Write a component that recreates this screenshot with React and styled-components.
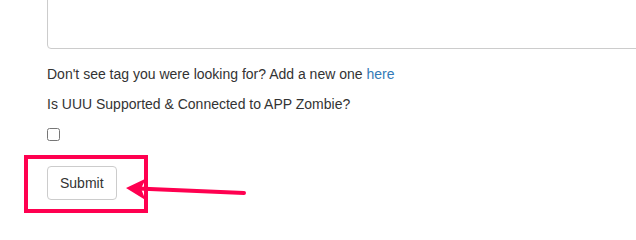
import React from "react";
import styled, { createGlobalStyle } from "styled-components";

const Global = createGlobalStyle`
  html, body { margin: 0; padding: 0; background: #fff; overflow: hidden; }
  body {
    font-family: "Liberation Sans", Arial, Helvetica, sans-serif;
    font-size: 14px;
    line-height: 20px;
    color: #333;
  }
  * { box-sizing: border-box; }
`;

const Page = styled.div`
  position: relative;
  width: 636px;
  height: 240px;
  overflow: hidden;
  padding-left: 47px;
`;

const FormGroup = styled.div`
  margin-bottom: 15px;
`;

const TextArea = styled.textarea`
  display: block;
  width: 700px;
  height: 90px;
  margin: -41px 0 0;
  padding: 6px 12px;
  border: 1px solid #ccc;
  border-radius: 4px;
  box-shadow: inset 0 1px 1px rgba(0, 0, 0, 0.075);
  resize: none;
  font: inherit;
  outline: none;
`;

const Para = styled.p`
  margin: 0 0 10px;
  line-height: 20px;
`;

const Link = styled.a`
  color: #337ab7;
  text-decoration: none;
`;

const CheckRow = styled.div`
  height: 13px;
  margin: 13.5px 0 25px;
  display: flex;
`;

const Check = styled.input`
  width: 13px;
  height: 13px;
  margin: 0;
`;

const Button = styled.button`
  display: inline-block;
  height: 34px;
  padding: 6px 12px;
  font-family: inherit;
  font-size: 14px;
  line-height: 20px;
  color: #333;
  background: #fff;
  border: 1px solid #ccc;
  border-radius: 4px;
  cursor: pointer;
`;

const Highlight = styled.div`
  position: absolute;
  left: 24px;
  top: 155px;
  width: 124px;
  height: 58px;
  border: 4px solid #ff0050;
  pointer-events: none;
`;

const Arrow = styled.svg`
  position: absolute;
  left: 0;
  top: 0;
  pointer-events: none;
`;

export default function App() {
  return (
    <>
      <Global />
      <Page>
        <FormGroup>
          <TextArea />
        </FormGroup>
        <Para>
          Don't see tag you were looking for? Add a new one <Link href="#">here</Link>
        </Para>
        <Para>Is UUU Supported &amp; Connected to APP Zombie?</Para>
        <CheckRow>
          <Check type="checkbox" />
        </CheckRow>
        <Button type="button">Submit</Button>
        <Highlight />
        <Arrow width="636" height="240" viewBox="0 0 636 240">
          <line x1="138" y1="188.5" x2="244" y2="193" stroke="#ff0050" strokeWidth="4" strokeLinecap="round" />
          <path d="M126 188 L146 178.5 L141 188.5 L145.5 200 Z" fill="#ff0050" />
        </Arrow>
      </Page>
    </>
  );
}
